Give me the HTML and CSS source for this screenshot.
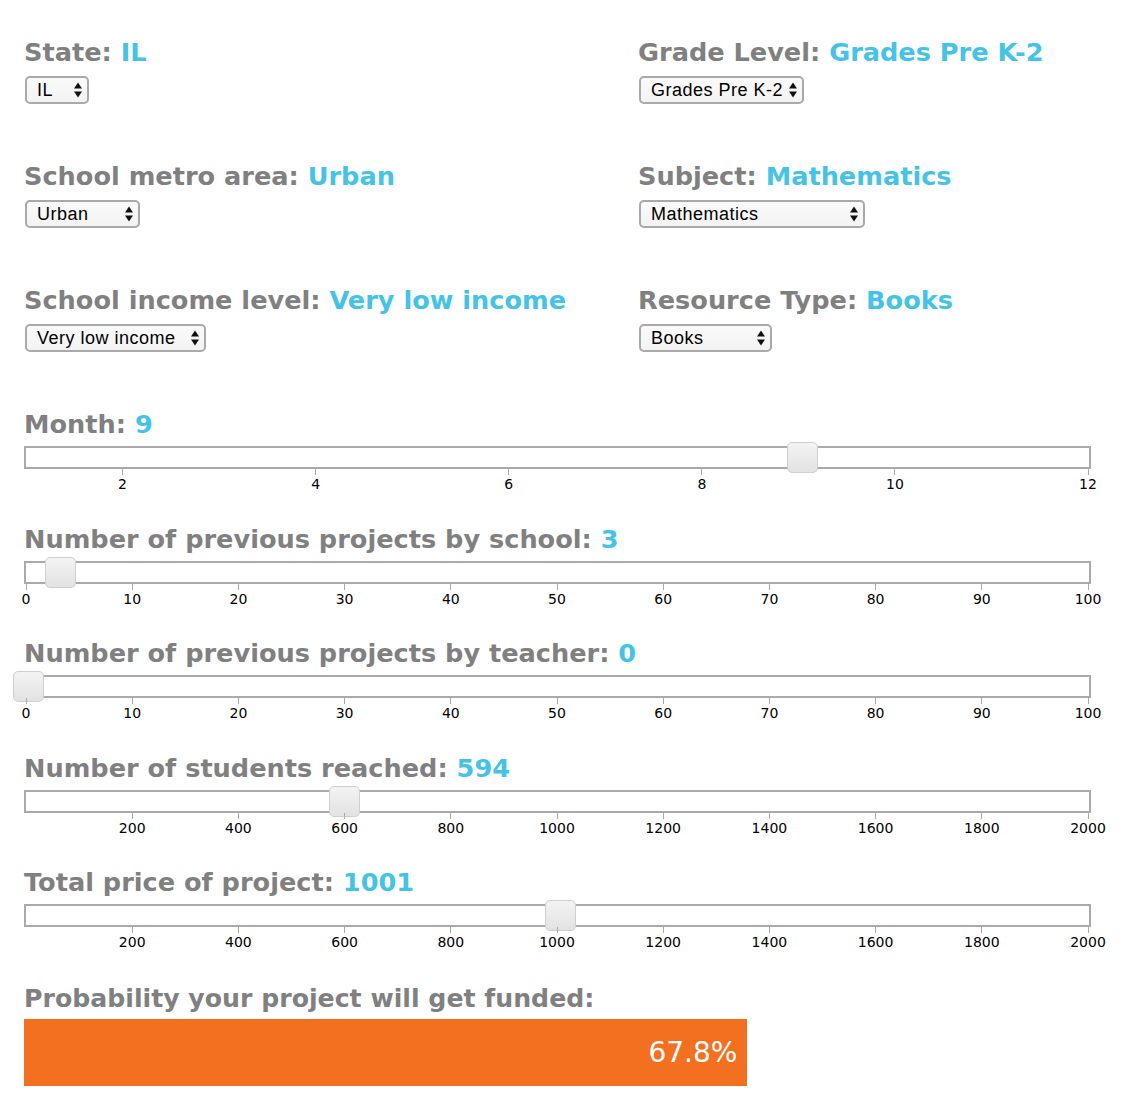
FILE: index.html
```html
<!DOCTYPE html>
<html lang="en">
<head>
<meta charset="utf-8">
<title>Project funding probability</title>
<link rel="stylesheet" href="styles.css">
</head>
<body>
<main class="page">
  <section class="fields">
    <div class="field">
      <h2 class="label">State: <span class="val">IL</span></h2>
      <div class="select sel-state"><span class="sel-text">IL</span><svg class="arrows" width="8" height="16" viewBox="0 0 8 16"><polygon points="0,6.5 4,0.5 8,6.5"/><polygon points="0,9.5 8,9.5 4,15.5"/></svg></div>
    </div>
    <div class="field">
      <h2 class="label">Grade Level: <span class="val">Grades Pre K-2</span></h2>
      <div class="select sel-grade"><span class="sel-text">Grades Pre K-2</span><svg class="arrows" width="8" height="16" viewBox="0 0 8 16"><polygon points="0,6.5 4,0.5 8,6.5"/><polygon points="0,9.5 8,9.5 4,15.5"/></svg></div>
    </div>
    <div class="field">
      <h2 class="label">School metro area: <span class="val">Urban</span></h2>
      <div class="select sel-metro"><span class="sel-text">Urban</span><svg class="arrows" width="8" height="16" viewBox="0 0 8 16"><polygon points="0,6.5 4,0.5 8,6.5"/><polygon points="0,9.5 8,9.5 4,15.5"/></svg></div>
    </div>
    <div class="field">
      <h2 class="label">Subject: <span class="val">Mathematics</span></h2>
      <div class="select sel-subject"><span class="sel-text">Mathematics</span><svg class="arrows" width="8" height="16" viewBox="0 0 8 16"><polygon points="0,6.5 4,0.5 8,6.5"/><polygon points="0,9.5 8,9.5 4,15.5"/></svg></div>
    </div>
    <div class="field">
      <h2 class="label">School income level: <span class="val">Very low income</span></h2>
      <div class="select sel-income"><span class="sel-text">Very low income</span><svg class="arrows" width="8" height="16" viewBox="0 0 8 16"><polygon points="0,6.5 4,0.5 8,6.5"/><polygon points="0,9.5 8,9.5 4,15.5"/></svg></div>
    </div>
    <div class="field">
      <h2 class="label">Resource Type: <span class="val">Books</span></h2>
      <div class="select sel-resource"><span class="sel-text">Books</span><svg class="arrows" width="8" height="16" viewBox="0 0 8 16"><polygon points="0,6.5 4,0.5 8,6.5"/><polygon points="0,9.5 8,9.5 4,15.5"/></svg></div>
    </div>
  </section>

  <section class="sliders">
    <div class="slider">
      <h2 class="label">Month: <span class="val">9</span></h2>
      <div class="track"><div class="handle" style="left:760.5px"></div></div>
      <div class="scale">
        <span class="tick" style="left:9.09%"></span><span class="num" style="left:9.09%">2</span>
        <span class="tick" style="left:27.27%"></span><span class="num" style="left:27.27%">4</span>
        <span class="tick" style="left:45.45%"></span><span class="num" style="left:45.45%">6</span>
        <span class="tick" style="left:63.64%"></span><span class="num" style="left:63.64%">8</span>
        <span class="tick" style="left:81.82%"></span><span class="num" style="left:81.82%">10</span>
        <span class="tick" style="left:100%"></span><span class="num" style="left:100%">12</span>
      </div>
    </div>

    <div class="slider">
      <h2 class="label">Number of previous projects by school: <span class="val">3</span></h2>
      <div class="track"><div class="handle" style="left:18.5px"></div></div>
      <div class="scale">
        <span class="tick" style="left:0%"></span><span class="num" style="left:0%">0</span>
        <span class="tick" style="left:10%"></span><span class="num" style="left:10%">10</span>
        <span class="tick" style="left:20%"></span><span class="num" style="left:20%">20</span>
        <span class="tick" style="left:30%"></span><span class="num" style="left:30%">30</span>
        <span class="tick" style="left:40%"></span><span class="num" style="left:40%">40</span>
        <span class="tick" style="left:50%"></span><span class="num" style="left:50%">50</span>
        <span class="tick" style="left:60%"></span><span class="num" style="left:60%">60</span>
        <span class="tick" style="left:70%"></span><span class="num" style="left:70%">70</span>
        <span class="tick" style="left:80%"></span><span class="num" style="left:80%">80</span>
        <span class="tick" style="left:90%"></span><span class="num" style="left:90%">90</span>
        <span class="tick" style="left:100%"></span><span class="num" style="left:100%">100</span>
      </div>
    </div>

    <div class="slider">
      <h2 class="label">Number of previous projects by teacher: <span class="val">0</span></h2>
      <div class="track"><div class="handle" style="left:-13.5px"></div></div>
      <div class="scale">
        <span class="tick" style="left:0%"></span><span class="num" style="left:0%">0</span>
        <span class="tick" style="left:10%"></span><span class="num" style="left:10%">10</span>
        <span class="tick" style="left:20%"></span><span class="num" style="left:20%">20</span>
        <span class="tick" style="left:30%"></span><span class="num" style="left:30%">30</span>
        <span class="tick" style="left:40%"></span><span class="num" style="left:40%">40</span>
        <span class="tick" style="left:50%"></span><span class="num" style="left:50%">50</span>
        <span class="tick" style="left:60%"></span><span class="num" style="left:60%">60</span>
        <span class="tick" style="left:70%"></span><span class="num" style="left:70%">70</span>
        <span class="tick" style="left:80%"></span><span class="num" style="left:80%">80</span>
        <span class="tick" style="left:90%"></span><span class="num" style="left:90%">90</span>
        <span class="tick" style="left:100%"></span><span class="num" style="left:100%">100</span>
      </div>
    </div>

    <div class="slider">
      <h2 class="label">Number of students reached: <span class="val">594</span></h2>
      <div class="track"><div class="handle" style="left:302.5px"></div></div>
      <div class="scale">
        <span class="tick" style="left:10%"></span><span class="num" style="left:10%">200</span>
        <span class="tick" style="left:20%"></span><span class="num" style="left:20%">400</span>
        <span class="tick" style="left:30%"></span><span class="num" style="left:30%">600</span>
        <span class="tick" style="left:40%"></span><span class="num" style="left:40%">800</span>
        <span class="tick" style="left:50%"></span><span class="num" style="left:50%">1000</span>
        <span class="tick" style="left:60%"></span><span class="num" style="left:60%">1200</span>
        <span class="tick" style="left:70%"></span><span class="num" style="left:70%">1400</span>
        <span class="tick" style="left:80%"></span><span class="num" style="left:80%">1600</span>
        <span class="tick" style="left:90%"></span><span class="num" style="left:90%">1800</span>
        <span class="tick" style="left:100%"></span><span class="num" style="left:100%">2000</span>
      </div>
    </div>

    <div class="slider">
      <h2 class="label">Total price of project: <span class="val">1001</span></h2>
      <div class="track"><div class="handle" style="left:518.5px"></div></div>
      <div class="scale">
        <span class="tick" style="left:10%"></span><span class="num" style="left:10%">200</span>
        <span class="tick" style="left:20%"></span><span class="num" style="left:20%">400</span>
        <span class="tick" style="left:30%"></span><span class="num" style="left:30%">600</span>
        <span class="tick" style="left:40%"></span><span class="num" style="left:40%">800</span>
        <span class="tick" style="left:50%"></span><span class="num" style="left:50%">1000</span>
        <span class="tick" style="left:60%"></span><span class="num" style="left:60%">1200</span>
        <span class="tick" style="left:70%"></span><span class="num" style="left:70%">1400</span>
        <span class="tick" style="left:80%"></span><span class="num" style="left:80%">1600</span>
        <span class="tick" style="left:90%"></span><span class="num" style="left:90%">1800</span>
        <span class="tick" style="left:100%"></span><span class="num" style="left:100%">2000</span>
      </div>
    </div>
  </section>

  <section class="result">
    <h2 class="label label-result">Probability your project will get funded:</h2>
    <div class="bar" style="width:67.8%"><span class="pct">67.8%</span></div>
  </section>
</main>
</body>
</html>
```

FILE: styles.css
```css
html, body {
  margin: 0;
  padding: 0;
  background: #ffffff;
}

body {
  font-family: "DejaVu Sans", Verdana, sans-serif;
  color: #000;
}

.page {
  width: 1067px;
  padding: 37px 0 0 24px;
}

.label {
  margin: 0;
  font-family: "DejaVu Sans", Verdana, sans-serif;
  font-weight: 700;
  font-size: 25.6px;
  line-height: 30px;
  color: #808080;
  white-space: nowrap;
}

.label-result {
  font-size: 25.2px;
}

.val {
  color: #45c3e6;
}

/* ---------- select row grid ---------- */
.fields {
  display: grid;
  grid-template-columns: 614px 1fr;
  row-gap: 57px;
}

.select {
  margin: 9px 0 0 1px;
  height: 28px;
  box-sizing: border-box;
  border: 2px solid #a9a9a9;
  border-radius: 5px;
  background: linear-gradient(#fafafa, #f3f3f3);
  display: flex;
  align-items: center;
  padding: 0 5px 0 10px;
  font-family: "Liberation Sans", Arial, sans-serif;
  font-size: 18px;
  letter-spacing: 0.5px;
  line-height: 24px;
  color: #000;
}

.sel-text {
  flex: 1;
  white-space: nowrap;
}

.arrows {
  flex: none;
  fill: #111;
}

.sel-state { width: 64px; }
.sel-grade { width: 165px; }
.sel-metro { width: 115px; }
.sel-subject { width: 226px; }
.sel-income { width: 181px; }
.sel-resource { width: 133px; }

/* ---------- sliders ---------- */
.sliders {
  margin-top: 57px;
}

.slider {
  height: 114.5px;
}

.track {
  position: relative;
  margin-top: 7px;
  height: 23px;
  box-sizing: border-box;
  border: 2px solid #aaaaaa;
  background: #fff;
}

.handle {
  position: absolute;
  top: -6px;
  width: 31px;
  height: 31px;
  box-sizing: border-box;
  border: 1.5px solid #cfcfcf;
  border-radius: 5px;
  background: linear-gradient(#f3f3f3, #e2e2e2);
}

.scale {
  position: relative;
  height: 24px;
  margin: 0 3px 0 2px;
}

.tick {
  position: absolute;
  top: 0;
  width: 1px;
  height: 6px;
  margin-left: -0.5px;
  background: #aaaaaa;
}

.num {
  position: absolute;
  top: 7px;
  transform: translateX(-50%);
  font-family: "DejaVu Sans", Verdana, sans-serif;
  font-size: 14px;
  line-height: 16px;
  color: #000;
  white-space: nowrap;
}

/* ---------- result ---------- */
.result {
  margin-top: 2px;
}

.bar {
  margin-top: 5px;
  height: 67px;
  background: #f37021;
  display: flex;
  align-items: center;
  justify-content: flex-end;
  box-sizing: border-box;
  padding-right: 10px;
}

.pct {
  font-family: "DejaVu Sans", Verdana, sans-serif;
  font-size: 28px;
  color: #ffffff;
}
```
